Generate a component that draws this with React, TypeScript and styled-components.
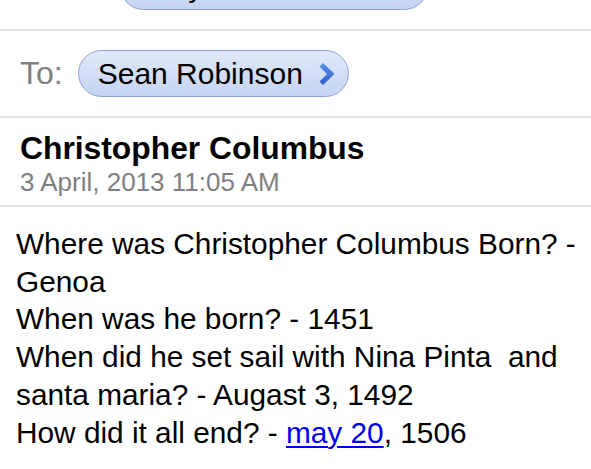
import React from 'react';
import styled, { createGlobalStyle } from 'styled-components';

const GlobalStyle = createGlobalStyle`
  html, body {
    margin: 0;
    padding: 0;
    background: #ffffff;
  }
  body {
    font-family: 'Liberation Sans', Arial, Helvetica, sans-serif;
    color: #000000;
    -webkit-font-smoothing: antialiased;
  }
`;

const Screen = styled.div`
  width: 591px;
  height: 469px;
  overflow: hidden;
  background: #ffffff;
`;

const FieldRow = styled.div<{ $height: number }>`
  display: flex;
  align-items: center;
  height: ${(p) => p.$height}px;
  padding-left: 20px;
  border-bottom: 2px solid #e3e3e3;
  overflow: hidden;
`;

const FromRow = styled.div`
  display: flex;
  align-items: flex-start;
  height: 29px;
  border-bottom: 2px solid #e3e3e3;
  overflow: hidden;
  padding-left: 120px;
`;

const Label = styled.span`
  font-size: 32px;
  color: #7f7f7f;
  margin-right: 15px;
`;

const Chip = styled.div<{ $offset?: number; $width?: number }>`
  display: inline-flex;
  align-items: center;
  flex-shrink: 0;
  box-sizing: border-box;
  height: 47px;
  width: ${(p) => (p.$width ? `${p.$width}px` : 'auto')};
  padding: 0 13px 0 19px;
  margin-top: ${(p) => p.$offset || 0}px;
  border: 1px solid #8ea3d4;
  border-radius: 24px;
  background: linear-gradient(#e1e9f9, #c4d4f2);
  font-size: 30px;
  color: #000000;
  white-space: nowrap;
`;

const ChipName = styled.span`
  flex: 1;
`;

const Chevron = styled.svg`
  margin-left: 15px;
  width: 17px;
  height: 22px;
`;

const Header = styled.div`
  padding: 11px 20px 8px;
  border-bottom: 2px solid #e3e3e3;
`;

const Subject = styled.div`
  font-size: 31.8px;
  font-weight: bold;
  line-height: 38px;
`;

const DateLine = styled.div`
  font-size: 26px;
  line-height: 30px;
  color: #7f7f7f;
`;

const Body = styled.div`
  padding: 18px 8px 0 16px;
  font-size: 29.8px;
  line-height: 37.7px;
`;

const Line = styled.div``;

const DateLink = styled.a`
  color: #0000ee;
  text-decoration: underline;
  text-underline-offset: 3px;
  text-decoration-thickness: 2px;
`;

const ChevronIcon = () => (
  <Chevron viewBox="0 0 17 22">
    <defs>
      <linearGradient id="chev" x1="0" y1="0" x2="0" y2="1">
        <stop offset="0" stopColor="#5b8ff0" />
        <stop offset="1" stopColor="#2f5fc8" />
      </linearGradient>
    </defs>
    <path d="M1.5 3.5 L5 0 L16.5 11 L5 22 L1.5 18.5 L9 11 Z" fill="url(#chev)" />
  </Chevron>
);

const App: React.FC = () => {
  return (
    <>
      <GlobalStyle />
      <Screen>
        <FromRow>
          <Chip $offset={-37} $width={308}>
            <ChipName>Tony Robinson</ChipName>
            <ChevronIcon />
          </Chip>
        </FromRow>
        <FieldRow $height={85}>
          <Label>To:</Label>
          <Chip>
            <ChipName>Sean Robinson</ChipName>
            <ChevronIcon />
          </Chip>
        </FieldRow>
        <Header>
          <Subject>Christopher Columbus</Subject>
          <DateLine>3 April, 2013 11:05 AM</DateLine>
        </Header>
        <Body>
          <Line>Where was Christopher Columbus Born? - Genoa</Line>
          <Line>When was he born? - 1451</Line>
          <Line>When did he set sail with Nina Pinta&nbsp; and santa maria? - Augast 3, 1492</Line>
          <Line>
            How did it all end? - <DateLink href="#">may 20</DateLink>, 1506
          </Line>
        </Body>
      </Screen>
    </>
  );
};

export default App;
